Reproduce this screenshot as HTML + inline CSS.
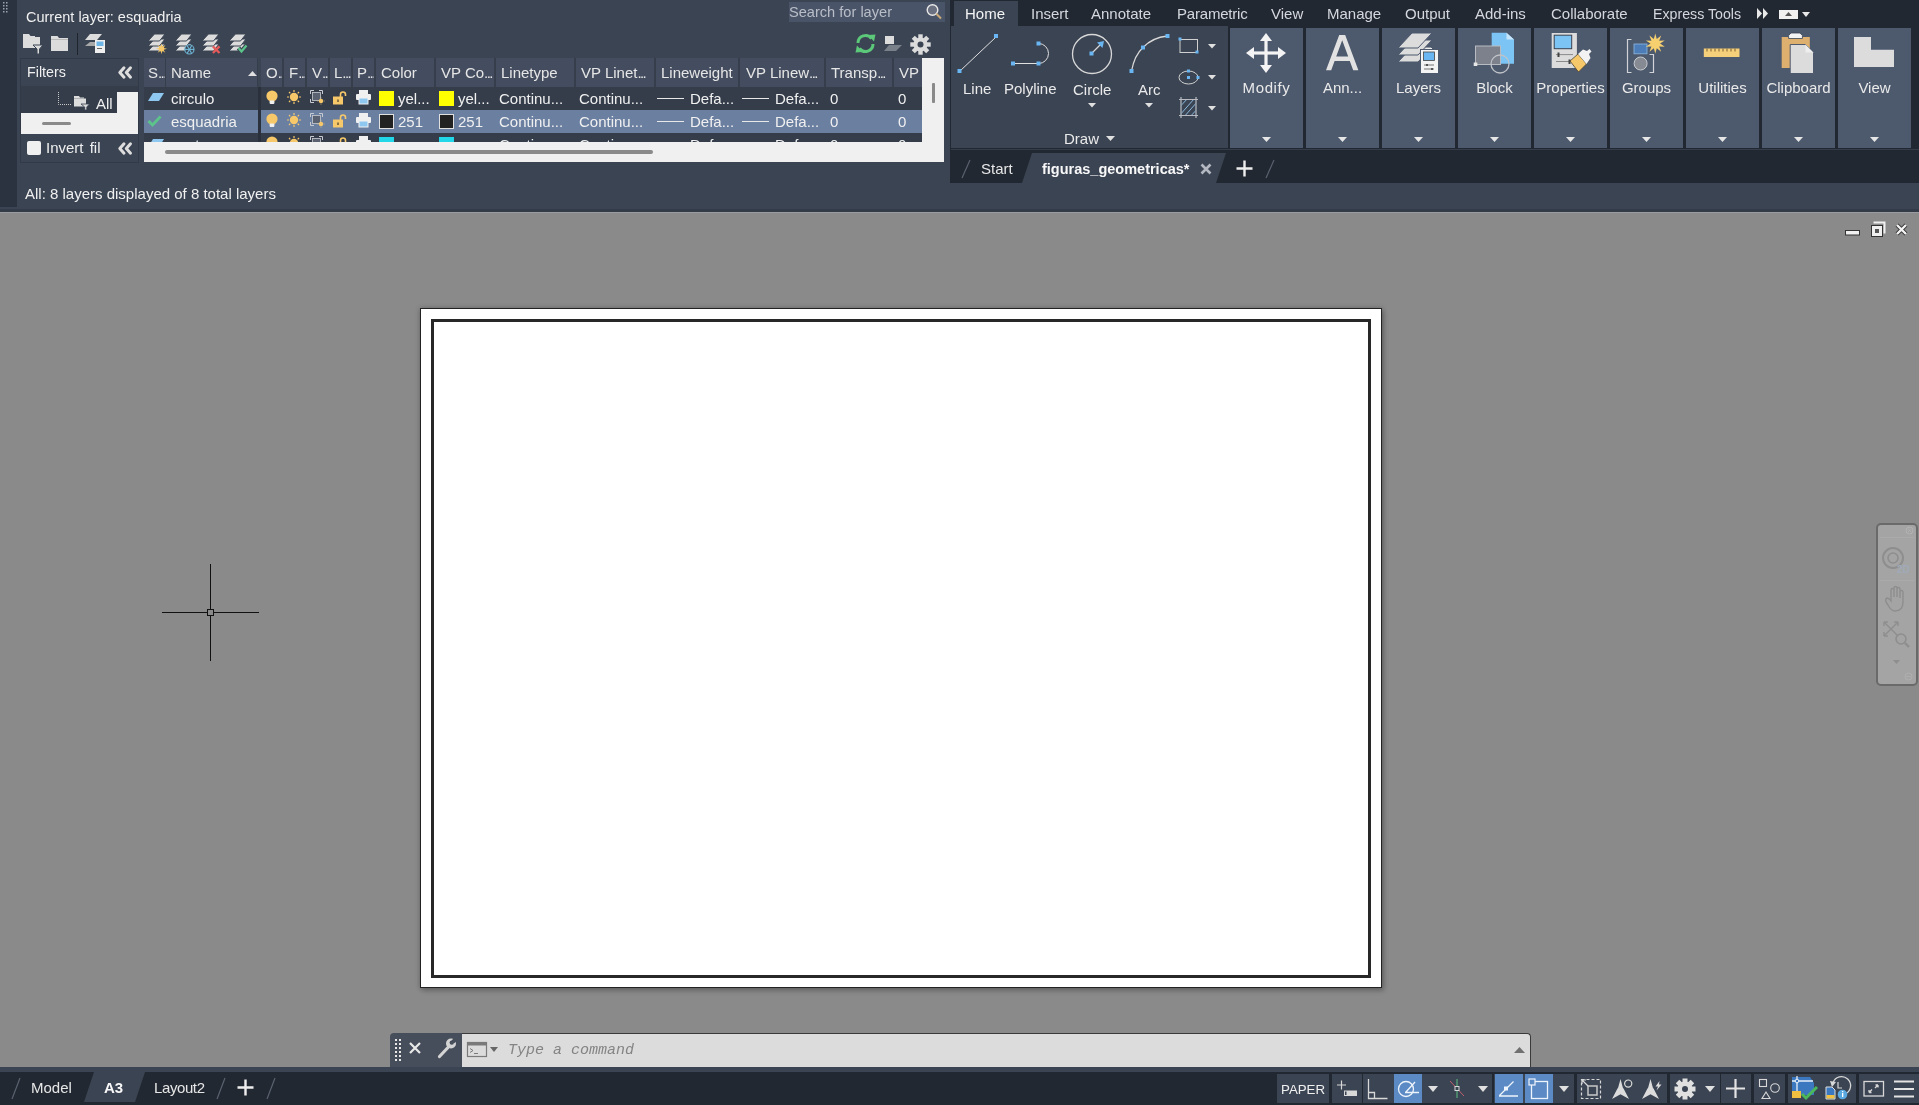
<!DOCTYPE html>
<html><head><meta charset="utf-8">
<style>
*{box-sizing:border-box;margin:0;padding:0}
html,body{width:1919px;height:1105px;overflow:hidden}
body{position:relative;background:#8a8a8a;font-family:"Liberation Sans",sans-serif;font-size:15px;color:#f0f0f0}
.a{position:absolute}
.t{position:absolute;white-space:nowrap;line-height:15px;font-size:15px;will-change:transform}
svg{position:absolute;overflow:visible}
</style></head><body>

<!-- ============ LAYER PALETTE ============ -->
<div class="a" style="left:0;top:0;width:1919px;height:212px;background:#3b4453"></div>
<div class="a" style="left:0;top:0;width:17px;height:207px;background:#2c3340"></div>
<div class="a" style="left:0;top:209px;width:1919px;height:3px;background:#343b48"></div>
<!-- grip dots -->
<svg style="left:3px;top:2px" width="6" height="10"><g fill="#9aa3b0"><rect x="0" y="0" width="1.5" height="1.5"/><rect x="3" y="0" width="1.5" height="1.5"/><rect x="0" y="3" width="1.5" height="1.5"/><rect x="3" y="3" width="1.5" height="1.5"/><rect x="0" y="6" width="1.5" height="1.5"/><rect x="3" y="6" width="1.5" height="1.5"/><rect x="0" y="9" width="1.5" height="1.5"/><rect x="3" y="9" width="1.5" height="1.5"/></g></svg>

<div class="t" style="left:26px;top:10px;font-size:14.5px">Current layer: esquadria</div>

<!-- search -->
<div class="a" style="left:789px;top:2px;width:156px;height:20px;background:#4a5468"></div>
<div class="t" style="left:789px;top:5px;font-size:14.6px;color:#b9bec8">Search for layer</div>
<svg style="left:925px;top:3px" width="20" height="19"><circle cx="7.5" cy="7" r="5.3" fill="#6a7080" stroke="#e8e8e8" stroke-width="1.4"/><line x1="11.3" y1="10.8" x2="16" y2="15.5" stroke="#c8a878" stroke-width="2"/></svg>


<!-- defs -->
<svg width="0" height="0" style="position:absolute">
<defs>
 <g id="lstack">
  <polygon points="6.5,10 17,10 11.5,17 0,17" fill="#dcdcdc" stroke="#3b4453" stroke-width="1"/>
  <polygon points="6.5,5 17,5 11.5,12 0,12" fill="#dcdcdc" stroke="#3b4453" stroke-width="1"/>
  <polygon points="6.5,0 17,0 11.5,7 0,7" fill="#dcdcdc" stroke="#3b4453" stroke-width="1"/>
 </g>
 <g id="bulb"><circle cx="7" cy="6" r="5.6" fill="#f6c86a"/><rect x="4.6" y="10.5" width="4.8" height="3.6" rx="1" fill="#f0f0f0"/></g>
 <g id="sun"><circle cx="7" cy="7" r="4.2" fill="#f6c86a"/><g stroke="#f6c86a" stroke-width="1.2"><line x1="7" y1="0" x2="7" y2="2"/><line x1="7" y1="12" x2="7" y2="14"/><line x1="0" y1="7" x2="2" y2="7"/><line x1="12" y1="7" x2="14" y2="7"/><line x1="2" y1="2" x2="3.3" y2="3.3"/><line x1="10.7" y1="10.7" x2="12" y2="12"/><line x1="12" y1="2" x2="10.7" y2="3.3"/><line x1="2" y1="12" x2="3.3" y2="10.7"/></g></g>
 <g id="vpf"><path d="M0.5,4V0.5H4M9,0.5H12.5V4M0.5,9V12.5H4" fill="none" stroke="#c8ccd2" stroke-width="1"/><rect x="2.5" y="2.5" width="8" height="8" fill="#5a6170" stroke="#c8ccd2" stroke-width="0.8"/><circle cx="11" cy="11" r="2.2" fill="#f6c86a"/><g stroke="#f6c86a" stroke-width="0.8"><line x1="11" y1="7.5" x2="11" y2="8.3"/><line x1="11" y1="13.7" x2="11" y2="14.5"/><line x1="7.5" y1="11" x2="8.3" y2="11"/><line x1="13.7" y1="11" x2="14.5" y2="11"/></g></g>
 <g id="lock"><path d="M7.5,7V4.5a2.5,2.5 0 0 1 5,0V6" fill="none" stroke="#f6c86a" stroke-width="1.6"/><rect x="0" y="6.5" width="10" height="8" fill="#f6c86a"/><rect x="4.3" y="9.5" width="1.4" height="2.5" fill="#5a4a30"/></g>
 <g id="plot"><rect x="3" y="0" width="9" height="4" fill="#f0f0f0"/><rect x="0" y="4" width="15" height="6" rx="1" fill="#f0f0f0"/><rect x="3" y="8" width="9" height="6" fill="#8ec8f0" stroke="#f0f0f0" stroke-width="1"/></g>
 <g id="chev"><path d="M6,0.8 L1.8,5.5 L6,10.2 M12.5,0.8 L8.3,5.5 L12.5,10.2" fill="none" stroke="#dedede" stroke-width="3" stroke-linejoin="round" stroke-linecap="round"/></g>
</defs></svg>

<!-- toolbar icons -->
<svg style="left:23px;top:34px" width="21" height="21">
 <path d="M0,0H6L7.5,2H12V3H0Z" fill="#dcdcdc"/><rect x="0" y="3" width="17" height="11" fill="#dcdcdc"/>
 <path d="M10,11H20L16.5,15V20H14V15Z" fill="#dcdcdc" stroke="#3b4453" stroke-width="1"/>
</svg>
<svg style="left:51px;top:36px" width="18" height="15">
 <path d="M0,0H6.5L8,2H17V15H0Z" fill="#dcdcdc"/><rect x="0" y="3" width="17" height="1" fill="#b8b8b8"/>
</svg>
<div class="a" style="left:77px;top:33px;width:1px;height:22px;background:#1e232c"></div>
<svg style="left:85px;top:34px" width="21" height="20">
 <polygon points="5,0 17,0 12,6 0,6" fill="#dcdcdc"/><polygon points="5,8 12,8 10,12 0,12" fill="#a8a8a8"/>
 <rect x="10" y="6" width="10" height="13" fill="#f0f0f0"/><rect x="11.5" y="7.5" width="7" height="4.5" fill="#6fb6e8"/><rect x="12" y="14" width="5" height="1" fill="#666"/>
</svg>
<svg style="left:148px;top:34px" width="22" height="22"><use href="#lstack"/><g transform="translate(13.5,14.8)"><polygon points="0.00,-5.50 0.84,-2.03 3.89,-3.89 2.03,-0.84 5.50,0.00 2.03,0.84 3.89,3.89 0.84,2.03 0.00,5.50 -0.84,2.03 -3.89,3.89 -2.03,0.84 -5.50,0.00 -2.03,-0.84 -3.89,-3.89 -0.84,-2.03" fill="#f6c86a"/><circle r="2.6" fill="#f6c86a"/></g></svg>
<svg style="left:175px;top:34px" width="22" height="22"><use href="#lstack"/><g transform="translate(14.4,15.4)" stroke="#6fb8d8" stroke-width="1.1" fill="none"><circle r="4.6" fill="#3b4453"/><line x1="-4.6" y1="0" x2="4.6" y2="0"/><line x1="-2.3" y1="-4" x2="2.3" y2="4"/><line x1="2.3" y1="-4" x2="-2.3" y2="4"/></g></svg>
<svg style="left:202px;top:34px" width="22" height="22"><use href="#lstack"/><g transform="translate(14.2,15.7)" stroke="#e85a5a" stroke-width="2.2"><line x1="-3.3" y1="-3.3" x2="3.3" y2="3.3"/><line x1="3.3" y1="-3.3" x2="-3.3" y2="3.3"/></g></svg>
<svg style="left:229px;top:34px" width="22" height="22"><use href="#lstack"/><path d="M9.5,14 L12.5,17.5 L17.5,11.5" fill="none" stroke="#3b4453" stroke-width="4.5"/><path d="M9.5,14 L12.5,17.5 L17.5,11.5" fill="none" stroke="#5cc48a" stroke-width="2.2"/></svg>

<!-- refresh / pref / gear -->
<svg style="left:855px;top:34px" width="22" height="19">
 <path d="M3,9 A7.5,7.5 0 0 1 16.5,4.5" fill="none" stroke="#5cc87a" stroke-width="3"/>
 <polygon points="13,1 20.5,0.5 19,7.5" fill="#5cc87a"/>
 <path d="M18,10 A7.5,7.5 0 0 1 4.5,14.5" fill="none" stroke="#5cc87a" stroke-width="3"/>
 <polygon points="8,18 0.5,18.5 2,11.5" fill="#5cc87a"/>
</svg>
<svg style="left:884px;top:36px" width="19" height="16">
 <rect x="1" y="0" width="9" height="8" fill="#dcdcdc"/><polygon points="5,9 18,9 12,15 0,15" fill="#7a808a"/>
</svg>
<svg style="left:910px;top:34px" width="21" height="21" viewBox="-10.5 -10.5 21 21">
 <g fill="#dcdcdc"><circle r="7"/><g id="teeth"><rect x="-2.2" y="-10.2" width="4.4" height="5"/><rect x="-2.2" y="5.2" width="4.4" height="5"/><rect x="-10.2" y="-2.2" width="5" height="4.4"/><rect x="5.2" y="-2.2" width="5" height="4.4"/></g><use href="#teeth" transform="rotate(45)"/></g><circle r="3" fill="#3b4453"/>
</svg>

<!-- filters box -->
<div class="a" style="left:20px;top:58px;width:119px;height:105px;background:#353d4b;border:1px solid #323947"></div>
<div class="a" style="left:21px;top:59px;width:117px;height:27px;background:#3b4453"></div>
<div class="t" style="left:27px;top:65px;font-size:14.3px">Filters</div>
<svg style="left:118px;top:67px" width="14" height="11"><use href="#chev"/></svg>
<svg style="left:58px;top:92px" width="14" height="13"><path d="M0.5,0V12.5H13" fill="none" stroke="#c8c8c8" stroke-width="1" stroke-dasharray="1,1"/></svg>
<svg style="left:74px;top:96px" width="16" height="14"><path d="M0,0H5L6,1.5H10V2.5H0Z" fill="#dcdcdc"/><rect x="0" y="2.5" width="12" height="8" fill="#dcdcdc"/><path d="M7,8H15.5L12.8,11V14H10.7V11Z" fill="#dcdcdc" stroke="#353d4b" stroke-width="0.8"/></svg>
<div class="t" style="left:96px;top:96px">All</div>
<div class="a" style="left:117px;top:92px;width:21px;height:41px;background:#f0f0f0"></div>
<div class="a" style="left:21px;top:113px;width:117px;height:21px;background:#f0f0f0"></div>
<div class="a" style="left:42px;top:122px;width:29px;height:3px;border-radius:2px;background:#8a8a8a"></div>
<div class="a" style="left:21px;top:134px;width:117px;height:28px;background:#3b4453"></div>
<div class="a" style="left:27px;top:141px;width:14px;height:14px;background:#f0f0f0;border-radius:2px"></div>
<div class="t" style="left:46px;top:140px;word-spacing:2px">Invert fil</div>
<svg style="left:118px;top:143px" width="14" height="11"><use href="#chev"/></svg>

<!-- layer table -->
<div class="a" style="left:144px;top:58px;width:778px;height:84px;overflow:hidden;background:#363e4c">
<div class="a" style="left:0px;top:0;width:21px;height:29px;background:#444d5f;overflow:hidden"><div class="t" style="left:4px;top:7px;color:#e6e6e6">S<span style='letter-spacing:-1.6px'>...</span></div></div>
<div class="a" style="left:22px;top:0;width:91px;height:29px;background:#444d5f;overflow:hidden"><div class="t" style="left:5px;top:7px;color:#e6e6e6">Name</div></div>
<div class="a" style="left:117px;top:0;width:21px;height:29px;background:#444d5f;overflow:hidden"><div class="t" style="left:5px;top:7px;color:#e6e6e6">O<span style='letter-spacing:-1.6px'>..</span></div></div>
<div class="a" style="left:140px;top:0;width:21px;height:29px;background:#444d5f;overflow:hidden"><div class="t" style="left:5px;top:7px;color:#e6e6e6">F<span style='letter-spacing:-1.6px'>...</span></div></div>
<div class="a" style="left:163px;top:0;width:21px;height:29px;background:#444d5f;overflow:hidden"><div class="t" style="left:5px;top:7px;color:#e6e6e6">V<span style='letter-spacing:-1.6px'>..</span></div></div>
<div class="a" style="left:186px;top:0;width:21px;height:29px;background:#444d5f;overflow:hidden"><div class="t" style="left:4px;top:7px;color:#e6e6e6">L<span style='letter-spacing:-1.6px'>...</span></div></div>
<div class="a" style="left:209px;top:0;width:21px;height:29px;background:#444d5f;overflow:hidden"><div class="t" style="left:4px;top:7px;color:#e6e6e6">P<span style='letter-spacing:-1.6px'>...</span></div></div>
<div class="a" style="left:232px;top:0;width:58px;height:29px;background:#444d5f;overflow:hidden"><div class="t" style="left:5px;top:7px;color:#e6e6e6">Color</div></div>
<div class="a" style="left:292px;top:0;width:58px;height:29px;background:#444d5f;overflow:hidden"><div class="t" style="left:5px;top:7px;color:#e6e6e6">VP Co<span style='letter-spacing:-1.6px'>...</span></div></div>
<div class="a" style="left:352px;top:0;width:78px;height:29px;background:#444d5f;overflow:hidden"><div class="t" style="left:5px;top:7px;color:#e6e6e6">Linetype</div></div>
<div class="a" style="left:432px;top:0;width:78px;height:29px;background:#444d5f;overflow:hidden"><div class="t" style="left:5px;top:7px;color:#e6e6e6">VP Linet<span style='letter-spacing:-1.6px'>...</span></div></div>
<div class="a" style="left:512px;top:0;width:82px;height:29px;background:#444d5f;overflow:hidden"><div class="t" style="left:5px;top:7px;color:#e6e6e6">Lineweight</div></div>
<div class="a" style="left:596px;top:0;width:84px;height:29px;background:#444d5f;overflow:hidden"><div class="t" style="left:6px;top:7px;color:#e6e6e6">VP Linew<span style='letter-spacing:-1.6px'>...</span></div></div>
<div class="a" style="left:682px;top:0;width:66px;height:29px;background:#444d5f;overflow:hidden"><div class="t" style="left:5px;top:7px;color:#e6e6e6">Transp<span style='letter-spacing:-1.6px'>...</span></div></div>
<div class="a" style="left:750px;top:0;width:39px;height:29px;background:#444d5f;overflow:hidden"><div class="t" style="left:5px;top:7px;color:#e6e6e6">VP T</div></div>
<svg style="left:104px;top:13px" width="9" height="5"><polygon points="0,5 4.5,0 9,5" fill="#e0e0e0"/></svg>
<div class="a" style="left:0;top:29px;width:778px;height:23px;background:#353d4b"></div>
<div class="a" style="left:0;top:52px;width:778px;height:23px;background:#6b7fa1"></div>
<div class="a" style="left:0;top:75px;width:778px;height:23px;background:#353d4b"></div>
<div class="a" style="left:114px;top:0;width:3px;height:84px;background:#2a303c"></div>
<div class="a" style="left:114px;top:0;width:3px;height:29px;background:#3b4453"></div>
<svg style="left:4px;top:35px" width="16" height="9"><polygon points="5,0 16,0 11,8 0,8" fill="#8ec8f0"/></svg>
<div class="t" style="left:27px;top:33px">circulo</div>
<svg style="left:121px;top:32px" width="14" height="16"><use href="#bulb"/></svg>
<svg style="left:142px;top:31px" width="16" height="16" viewBox="-1 -1 16 16"><use href="#sun"/></svg>
<svg style="left:166px;top:32px" width="16" height="16"><use href="#vpf"/></svg>
<svg style="left:189px;top:32px" width="16" height="16"><use href="#lock"/></svg>
<svg style="left:212px;top:32px" width="16" height="16"><use href="#plot"/></svg>
<div class="a" style="left:235px;top:33px;width:15px;height:15px;background:#ffff00;"></div>
<div class="t" style="left:254px;top:33px">yel...</div>
<div class="a" style="left:295px;top:33px;width:15px;height:15px;background:#ffff00;"></div>
<div class="t" style="left:314px;top:33px">yel...</div>
<div class="t" style="left:355px;top:33px">Continu...</div>
<div class="t" style="left:435px;top:33px">Continu...</div>
<div class="a" style="left:513px;top:40px;width:27px;height:1px;background:#e8e8e8"></div>
<div class="t" style="left:546px;top:33px">Defa...</div>
<div class="a" style="left:598px;top:40px;width:27px;height:1px;background:#e8e8e8"></div>
<div class="t" style="left:631px;top:33px">Defa...</div>
<div class="t" style="left:686px;top:33px">0</div>
<div class="t" style="left:754px;top:33px">0</div>
<svg style="left:3px;top:57px" width="16" height="13"><path d="M1.5,6 L5.5,10 L13.5,1.5" fill="none" stroke="#5cc48a" stroke-width="2.8"/></svg>
<div class="t" style="left:27px;top:56px">esquadria</div>
<svg style="left:121px;top:55px" width="14" height="16"><use href="#bulb"/></svg>
<svg style="left:142px;top:54px" width="16" height="16" viewBox="-1 -1 16 16"><use href="#sun"/></svg>
<svg style="left:166px;top:55px" width="16" height="16"><use href="#vpf"/></svg>
<svg style="left:189px;top:55px" width="16" height="16"><use href="#lock"/></svg>
<svg style="left:212px;top:55px" width="16" height="16"><use href="#plot"/></svg>
<div class="a" style="left:235px;top:56px;width:15px;height:15px;background:#222222;border:1px solid #e0e0e0;"></div>
<div class="t" style="left:254px;top:56px">251</div>
<div class="a" style="left:295px;top:56px;width:15px;height:15px;background:#222222;border:1px solid #e0e0e0;"></div>
<div class="t" style="left:314px;top:56px">251</div>
<div class="t" style="left:355px;top:56px">Continu...</div>
<div class="t" style="left:435px;top:56px">Continu...</div>
<div class="a" style="left:513px;top:63px;width:27px;height:1px;background:#e8e8e8"></div>
<div class="t" style="left:546px;top:56px">Defa...</div>
<div class="a" style="left:598px;top:63px;width:27px;height:1px;background:#e8e8e8"></div>
<div class="t" style="left:631px;top:56px">Defa...</div>
<div class="t" style="left:686px;top:56px">0</div>
<div class="t" style="left:754px;top:56px">0</div>
<svg style="left:4px;top:81px" width="16" height="9"><polygon points="5,0 16,0 11,8 0,8" fill="#8ec8f0"/></svg>
<div class="t" style="left:27px;top:79px">contorno</div>
<svg style="left:121px;top:78px" width="14" height="16"><use href="#bulb"/></svg>
<svg style="left:142px;top:77px" width="16" height="16" viewBox="-1 -1 16 16"><use href="#sun"/></svg>
<svg style="left:166px;top:78px" width="16" height="16"><use href="#vpf"/></svg>
<svg style="left:189px;top:78px" width="16" height="16"><use href="#lock"/></svg>
<svg style="left:212px;top:78px" width="16" height="16"><use href="#plot"/></svg>
<div class="a" style="left:235px;top:79px;width:15px;height:15px;background:#22d8e8;"></div>
<div class="t" style="left:254px;top:79px">cyan</div>
<div class="a" style="left:295px;top:79px;width:15px;height:15px;background:#22d8e8;"></div>
<div class="t" style="left:314px;top:79px">cyan</div>
<div class="t" style="left:355px;top:79px">Continu...</div>
<div class="t" style="left:435px;top:79px">Continu...</div>
<div class="a" style="left:513px;top:86px;width:27px;height:1px;background:#e8e8e8"></div>
<div class="t" style="left:546px;top:79px">Defa...</div>
<div class="a" style="left:598px;top:86px;width:27px;height:1px;background:#e8e8e8"></div>
<div class="t" style="left:631px;top:79px">Defa...</div>
<div class="t" style="left:686px;top:79px">0</div>
<div class="t" style="left:754px;top:79px">0</div>
</div>
<div class="a" style="left:922px;top:58px;width:22px;height:104px;background:#f0f0f0"></div>
<div class="a" style="left:144px;top:142px;width:800px;height:20px;background:#f0f0f0"></div>
<div class="a" style="left:932px;top:83px;width:3px;height:20px;background:#8a8a8a;border-radius:1px"></div>
<div class="a" style="left:165px;top:150px;width:488px;height:4px;background:#8a8a8a;border-radius:2px"></div>
<div class="t" style="left:25px;top:186px">All: 8 layers displayed of 8 total layers</div>


<!-- ============ RIBBON ============ -->
<div class="a" style="left:950px;top:0;width:969px;height:183px;background:#222832"></div>
<div class="a" style="left:951px;top:26px;width:277px;height:122px;background:#3b4453"></div>
<div class="a" style="left:954px;top:1px;width:64px;height:26px;background:#3b4453"></div>
<div class="t" style="left:965px;top:6px;color:#f4f4f4">Home</div>
<div class="t" style="left:1031px;top:6px;color:#d4d8de">Insert</div>
<div class="t" style="left:1091px;top:6px;color:#d4d8de">Annotate</div>
<div class="t" style="left:1177px;top:6px;color:#d4d8de;letter-spacing:-0.2px">Parametric</div>
<div class="t" style="left:1271px;top:6px;color:#d4d8de">View</div>
<div class="t" style="left:1327px;top:6px;color:#d4d8de">Manage</div>
<div class="t" style="left:1405px;top:6px;color:#d4d8de">Output</div>
<div class="t" style="left:1475px;top:6px;color:#d4d8de">Add-ins</div>
<div class="t" style="left:1551px;top:6px;color:#d4d8de">Collaborate</div>
<div class="t" style="left:1653px;top:7px;color:#d4d8de;font-size:14.2px">Express Tools</div>
<svg style="left:1757px;top:8px" width="12" height="11"><polygon points="0,0 5,5.5 0,11" fill="#e8e8e8"/><polygon points="6,0 11,5.5 6,11" fill="#e8e8e8"/></svg>
<div class="a" style="left:1779px;top:10px;width:19px;height:9px;background:#f0f0f0"></div>
<svg style="left:1785px;top:12px" width="7" height="4"><polygon points="0,4 3.5,0 7,4" fill="#555"/></svg>
<svg style="left:1802px;top:12px" width="8" height="5"><polygon points="0,0 8,0 4,5" fill="#e8e8e8"/></svg>

<!-- Draw panel icons -->
<svg style="left:956px;top:33px" width="44" height="42">
 <line x1="4" y1="38" x2="40" y2="4" stroke="#e0e0e0" stroke-width="1"/>
 <rect x="1.5" y="36" width="4" height="4" fill="#6ab6f2"/><rect x="38" y="1" width="4" height="4" fill="#6ab6f2"/>
</svg>
<div class="t" style="left:963px;top:81px;color:#eaeaea">Line</div>
<svg style="left:1009px;top:40px" width="46" height="28">
 <path d="M4,23.5 H29.5 A10,10 0 0 0 29.5,3.5" fill="none" stroke="#e0e0e0" stroke-width="1"/>
 <rect x="2" y="21.5" width="4" height="4" fill="#6ab6f2"/><rect x="27.5" y="21.5" width="4" height="4" fill="#6ab6f2"/><rect x="27.5" y="1.5" width="4" height="4" fill="#6ab6f2"/>
</svg>
<div class="t" style="left:1004px;top:81px;color:#eaeaea">Polyline</div>
<svg style="left:1070px;top:32px" width="44" height="44">
 <circle cx="22" cy="22" r="19.5" fill="none" stroke="#d8d8d8" stroke-width="1.3"/>
 <line x1="21.5" y1="21.5" x2="32" y2="11" stroke="#d8d8d8" stroke-width="1.3"/>
 <rect x="19.5" y="19.5" width="4" height="4" fill="#6ab6f2"/><polygon points="34,9 27,10.5 32.5,16" fill="#6ab6f2"/>
</svg>
<div class="t" style="left:1073px;top:82px;color:#eaeaea">Circle</div>
<svg style="left:1088px;top:103px" width="8" height="5"><polygon points="0,0 8,0 4,4.5" fill="#e0e0e0"/></svg>
<svg style="left:1128px;top:33px" width="44" height="42">
 <path d="M3.5,38 C6,25 10,19 15,14.5 C21,8 30,4 39.5,3" fill="none" stroke="#d8d8d8" stroke-width="1.3"/>
 <rect x="1.5" y="36" width="4" height="4" fill="#6ab6f2"/><rect x="13" y="12.5" width="4" height="4" fill="#6ab6f2"/><rect x="37.5" y="1" width="4" height="4" fill="#6ab6f2"/>
</svg>
<div class="t" style="left:1138px;top:82px;color:#eaeaea">Arc</div>
<svg style="left:1145px;top:103px" width="8" height="5"><polygon points="0,0 8,0 4,4.5" fill="#e0e0e0"/></svg>
<svg style="left:1178px;top:37px" width="23" height="18">
 <rect x="2" y="2.5" width="17.5" height="13" fill="none" stroke="#d0d0d0" stroke-width="1"/>
 <rect x="0.5" y="0.5" width="3" height="3" fill="#6ab6f2"/><rect x="17.5" y="13.5" width="3" height="3" fill="#6ab6f2"/>
</svg>
<svg style="left:1208px;top:44px" width="8" height="5"><polygon points="0,0 8,0 4,4.5" fill="#e0e0e0"/></svg>
<svg style="left:1178px;top:69px" width="23" height="18">
 <ellipse cx="10.5" cy="8.5" rx="9.5" ry="6.5" fill="none" stroke="#d0d0d0" stroke-width="1"/>
 <rect x="9" y="0.5" width="3" height="3" fill="#6ab6f2"/><rect x="9" y="7" width="3" height="3" fill="#6ab6f2"/><rect x="18.5" y="7" width="3" height="3" fill="#6ab6f2"/>
</svg>
<svg style="left:1208px;top:75px" width="8" height="5"><polygon points="0,0 8,0 4,4.5" fill="#e0e0e0"/></svg>
<svg style="left:1179px;top:97px" width="22" height="22">
 <path d="M2,0V21M17,0V21M0,2.5H19M0,18.5H19" stroke="#b8bcc2" stroke-width="1.2"/>
 <clipPath id="hc"><rect x="2.5" y="3" width="14" height="15"/></clipPath>
 <g clip-path="url(#hc)" stroke="#8ab8dc" stroke-width="1"><line x1="-4" y1="15" x2="10" y2="0"/><line x1="0" y1="19" x2="15" y2="2"/><line x1="4" y1="21" x2="19" y2="4"/><line x1="8" y1="23" x2="23" y2="7"/><line x1="12" y1="25" x2="27" y2="10"/></g>
</svg>
<svg style="left:1208px;top:106px" width="8" height="5"><polygon points="0,0 8,0 4,4.5" fill="#e0e0e0"/></svg>
<div class="t" style="left:1064px;top:131px;color:#eaeaea">Draw</div>
<svg style="left:1106px;top:136px" width="9" height="5"><polygon points="0,0 9,0 4.5,5" fill="#e0e0e0"/></svg>
<div class="a" style="left:1230px;top:28px;width:73px;height:120px;background:#4d596d"></div>
<div class="t" style="left:1230px;width:73px;text-align:center;top:80px;color:#eaeaea;letter-spacing:0.6px">Modify</div>
<svg style="left:1262px;top:137px" width="9" height="5"><polygon points="0,0 9,0 4.5,5" fill="#e6e6e6"/></svg>
<div class="a" style="left:1306px;top:28px;width:73px;height:120px;background:#4d596d"></div>
<div class="t" style="left:1306px;width:73px;text-align:center;top:80px;color:#eaeaea">Ann...</div>
<svg style="left:1338px;top:137px" width="9" height="5"><polygon points="0,0 9,0 4.5,5" fill="#e6e6e6"/></svg>
<div class="a" style="left:1382px;top:28px;width:73px;height:120px;background:#4d596d"></div>
<div class="t" style="left:1382px;width:73px;text-align:center;top:80px;color:#eaeaea">Layers</div>
<svg style="left:1414px;top:137px" width="9" height="5"><polygon points="0,0 9,0 4.5,5" fill="#e6e6e6"/></svg>
<div class="a" style="left:1458px;top:28px;width:73px;height:120px;background:#4d596d"></div>
<div class="t" style="left:1458px;width:73px;text-align:center;top:80px;color:#eaeaea">Block</div>
<svg style="left:1490px;top:137px" width="9" height="5"><polygon points="0,0 9,0 4.5,5" fill="#e6e6e6"/></svg>
<div class="a" style="left:1534px;top:28px;width:73px;height:120px;background:#4d596d"></div>
<div class="t" style="left:1534px;width:73px;text-align:center;top:80px;color:#eaeaea">Properties</div>
<svg style="left:1566px;top:137px" width="9" height="5"><polygon points="0,0 9,0 4.5,5" fill="#e6e6e6"/></svg>
<div class="a" style="left:1610px;top:28px;width:73px;height:120px;background:#4d596d"></div>
<div class="t" style="left:1610px;width:73px;text-align:center;top:80px;color:#eaeaea">Groups</div>
<svg style="left:1642px;top:137px" width="9" height="5"><polygon points="0,0 9,0 4.5,5" fill="#e6e6e6"/></svg>
<div class="a" style="left:1686px;top:28px;width:73px;height:120px;background:#4d596d"></div>
<div class="t" style="left:1686px;width:73px;text-align:center;top:80px;color:#eaeaea">Utilities</div>
<svg style="left:1718px;top:137px" width="9" height="5"><polygon points="0,0 9,0 4.5,5" fill="#e6e6e6"/></svg>
<div class="a" style="left:1762px;top:28px;width:73px;height:120px;background:#4d596d"></div>
<div class="t" style="left:1762px;width:73px;text-align:center;top:80px;color:#eaeaea">Clipboard</div>
<svg style="left:1794px;top:137px" width="9" height="5"><polygon points="0,0 9,0 4.5,5" fill="#e6e6e6"/></svg>
<div class="a" style="left:1838px;top:28px;width:73px;height:120px;background:#4d596d"></div>
<div class="t" style="left:1838px;width:73px;text-align:center;top:80px;color:#eaeaea">View</div>
<svg style="left:1870px;top:137px" width="9" height="5"><polygon points="0,0 9,0 4.5,5" fill="#e6e6e6"/></svg>

<!-- Modify icon -->
<svg style="left:1245px;top:32px" width="42" height="42" viewBox="-21 -21 42 42">
 <g fill="#f4f4f4"><rect x="-1.6" y="-14" width="3.2" height="28"/><rect x="-14" y="-1.6" width="28" height="3.2"/>
 <polygon points="0,-20 -6,-12 6,-12"/><polygon points="0,20 -6,12 6,12"/><polygon points="-20,0 -12,-6 -12,6"/><polygon points="20,0 12,-6 12,6"/></g>
</svg>
<!-- Ann icon -->
<svg style="left:1326px;top:35px" width="33" height="36"><path d="M0,35.2 L13.2,0 H19.2 L32.4,35.2 H27.2 L23.8,26 H8.6 L5.2,35.2Z M10.2,21.6 H22.2 L16.2,5.2Z" fill="#e2e2e2" fill-rule="evenodd"/></svg>
<!-- Layers icon -->
<svg style="left:1396px;top:31px" width="46" height="44">
 <polygon points="16,16 36,16 22,31 2,31" fill="#dcdcdc" stroke="#4d596d" stroke-width="1"/>
 <polygon points="16,9 36,9 22,24 2,24" fill="#dcdcdc" stroke="#4d596d" stroke-width="1"/>
 <polygon points="16,2 36,2 22,17 2,17" fill="#dcdcdc" stroke="#4d596d" stroke-width="1"/>
 <rect x="30" y="17" width="6" height="3" fill="#f0f0f0"/>
 <rect x="24.5" y="18.5" width="18" height="24" fill="#f4f4f4" stroke="#4d596d" stroke-width="1"/>
 <rect x="27.5" y="21" width="11" height="8.5" fill="#6ab6f2" stroke="#444" stroke-width="0.8"/>
 <path d="M28,34H38M28,38H38" stroke="#777" stroke-width="1"/><rect x="30" y="33" width="2" height="2" fill="#555"/><rect x="35" y="37" width="2" height="2" fill="#555"/>
</svg>
<!-- Block icon -->
<svg style="left:1472px;top:31px" width="46" height="46">
 <path d="M19.7,1.8H34.5L42,8.5V32.7H19.7Z" fill="#7cc4f4"/><path d="M34.5,1.8V8.5H42Z" fill="#c8e6fa"/>
 <rect x="3.5" y="15" width="25" height="18.5" fill="#7c818b" stroke="#b8bcc2" stroke-width="1"/>
 <circle cx="28" cy="33" r="9" fill="none" stroke="#bfc3c8" stroke-width="1.3"/>
 <rect x="1.7" y="31.5" width="3.6" height="3.5" fill="#e8e8e8"/>
</svg>
<!-- Properties icon -->
<svg style="left:1550px;top:32px" width="44" height="44">
 <rect x="1.7" y="1" width="25.2" height="35" fill="#dcdcdc"/>
 <rect x="4.2" y="3.2" width="17.5" height="13.5" fill="#7cc4f4" stroke="#3a4250" stroke-width="1"/>
 <path d="M6,22.6H23M6,29.5H22" stroke="#8a8a8a" stroke-width="1"/><rect x="7.5" y="20.5" width="2" height="4.5" fill="#444"/><rect x="18.5" y="27.5" width="2" height="4.5" fill="#444"/>
 <polygon points="20,29 28,22 36.5,32 28.5,40" fill="#f6c86a" stroke="#4a4030" stroke-width="0.8"/>
 <polygon points="28,22 33,17.5 37,19 39.5,17 41.5,19.5 39,22 40.5,26 36.5,32" fill="#f2f2f2"/>
</svg>
<!-- Groups icon -->
<svg style="left:1625px;top:32px" width="44" height="44">
 <path d="M6.5,7.5H2.5V40.5H6.5M24.5,22.5H28.5V40.5H24.5" fill="none" stroke="#d0d4d8" stroke-width="1.2"/>
 <rect x="9" y="12" width="13" height="9.8" fill="#4d7db8" stroke="#8cb8e0" stroke-width="0.8"/>
 <circle cx="15.6" cy="31.5" r="6.5" fill="#868a92" stroke="#c8ccd0" stroke-width="1"/>
 <g transform="translate(30.3,11.6)"><polygon points="0.00,-10.00 1.48,-4.57 5.88,-8.09 3.88,-2.82 9.51,-3.09 4.80,0.00 9.51,3.09 3.88,2.82 5.88,8.09 1.48,4.57 0.00,10.00 -1.48,4.57 -5.88,8.09 -3.88,2.82 -9.51,3.09 -4.80,0.00 -9.51,-3.09 -3.88,-2.82 -5.88,-8.09 -1.48,-4.57" fill="#f6cf6e"/></g>
</svg>
<!-- Utilities icon -->
<svg style="left:1703px;top:48px" width="38" height="10">
 <rect x="0.8" y="0.5" width="35.7" height="8.5" fill="#f6cf7a"/>
 <g stroke="#7a6030" stroke-width="1"><line x1="4" y1="0.5" x2="4" y2="3.5"/><line x1="8" y1="0.5" x2="8" y2="3.5"/><line x1="12" y1="0.5" x2="12" y2="3.5"/><line x1="16" y1="0.5" x2="16" y2="3.5"/><line x1="20" y1="0.5" x2="20" y2="3.5"/><line x1="24" y1="0.5" x2="24" y2="3.5"/><line x1="28" y1="0.5" x2="28" y2="3.5"/><line x1="32" y1="0.5" x2="32" y2="3.5"/></g>
</svg>
<!-- Clipboard icon -->
<svg style="left:1780px;top:32px" width="38" height="44">
 <rect x="1.7" y="5" width="28.1" height="31" fill="#ddb070"/>
 <path d="M8.6,6.5V3.5L11,1H20L22.4,3.5V6.5Z" fill="#f4f4f4" stroke="#3a4250" stroke-width="0.8"/>
 <path d="M10.2,12.5H25.5L33.5,20.5V41.5H10.2Z" fill="#dcdcdc" stroke="#4d596d" stroke-width="1"/><path d="M25.5,12.5V20.5H33.5Z" fill="#eeeeee"/>
</svg>
<!-- View icon -->
<svg style="left:1854px;top:37px" width="41" height="31">
 <path d="M0,0H17V12.7H40V30H0Z" fill="#dcdcdc"/>
</svg>

<div class="a" style="left:951px;top:149px;width:968px;height:1px;background:#353d4b"></div>
<!-- File tabs row -->
<div class="a" style="left:951px;top:153px;width:968px;height:30px;background:#222832"></div>
<svg style="left:960px;top:158px" width="14" height="22"><line x1="2" y1="20" x2="10" y2="2" stroke="#5a6270" stroke-width="1.2"/></svg>
<div class="t" style="left:981px;top:161px;color:#e6e6e6">Start</div>
<svg style="left:1020px;top:153px" width="208" height="30"><polygon points="12,0 206,0 196,30 2,30" fill="#3b4453"/></svg>
<div class="t" style="left:1042px;top:162px;font-weight:bold;font-size:14.5px;color:#f8f8f8">figuras_geometricas*</div>
<svg style="left:1200px;top:163px" width="12" height="12"><path d="M1.5,1.5L10.5,10.5M10.5,1.5L1.5,10.5" stroke="#b4b8c0" stroke-width="2.6"/></svg>
<svg style="left:1236px;top:160px" width="17" height="17"><path d="M8.5,0.5V16.5M0.5,8.5H16.5" stroke="#eeeeee" stroke-width="2.4"/></svg>
<svg style="left:1264px;top:158px" width="14" height="22"><line x1="2" y1="20" x2="10" y2="2" stroke="#5a6270" stroke-width="1.2"/></svg>


<!-- ============ DRAWING AREA ============ -->
<div class="a" style="left:0;top:212px;width:1919px;height:1px;background:#9a9ca2"></div>
<!-- paper -->
<div class="a" style="left:420px;top:308px;width:962px;height:680px;background:#ffffff;border:1px solid #222;box-shadow:2px 3px 5px rgba(0,0,0,0.2), 0 0 5px rgba(0,0,0,0.24)"></div>
<div class="a" style="left:431px;top:319px;width:940px;height:659px;border:3px solid #282828"></div>
<!-- crosshair -->
<div class="a" style="left:210px;top:564px;width:1px;height:97px;background:#111"></div>
<div class="a" style="left:162px;top:612px;width:97px;height:1px;background:#111"></div>
<div class="a" style="left:207px;top:609px;width:7px;height:7px;border:1px solid #111;background:#8a8a8a"></div>
<!-- viewport controls -->
<svg style="left:1843px;top:220px" width="70" height="20">
 <rect x="2.5" y="10.5" width="14" height="4.5" fill="#f0f0f0" stroke="#333" stroke-width="1"/>
 <path d="M30.5,2.5H41.5V13.5" fill="none" stroke="#f0f0f0" stroke-width="2"/>
 <rect x="28.5" y="5.5" width="11" height="11" fill="#f0f0f0" stroke="#333" stroke-width="1"/>
 <rect x="32" y="9" width="4" height="4" fill="#555"/>
 <path d="M54,5L63,14M63,5L54,14" stroke="#333" stroke-width="4"/>
 <path d="M54,5L63,14M63,5L54,14" stroke="#f4f4f4" stroke-width="2.4"/>
</svg>
<!-- navbar -->
<div class="a" style="left:1876px;top:523px;width:42px;height:163px;background:#a4a4a4;border:2px solid #6a6a6a;border-radius:5px"></div>
<div class="a" style="left:1880px;top:537px;width:34px;height:1px;background:#aaaaaa"></div>
<div class="a" style="left:1880px;top:580px;width:34px;height:1px;background:#aaaaaa"></div>
<svg style="left:1905px;top:526px" width="9" height="9"><circle cx="4.5" cy="4.5" r="3.5" fill="none" stroke="#b4b4b4" stroke-width="1"/><path d="M3,3L6,6M6,3L3,6" stroke="#b4b4b4" stroke-width="0.8"/></svg>
<svg style="left:1881px;top:546px" width="34" height="30">
 <circle cx="12" cy="12" r="10" fill="none" stroke="#8e8e8e" stroke-width="2"/><circle cx="12" cy="12" r="5" fill="none" stroke="#8e8e8e" stroke-width="1.6"/>
 <text x="16" y="27" font-family="Liberation Sans" font-size="10" font-weight="bold" fill="#a0aab8">2D</text>
</svg>
<svg style="left:1882px;top:585px" width="30" height="30">
 <path d="M6,20 C3,16 3,14 5,13 C7,13 8,15 9,16 V5 C9,3 12,3 12,5 V12 V3 C12,1 15,1 15,3 V12 V4 C15,2 18,2 18,4 V13 V7 C18,5 21,5 21,7 V17 C21,23 18,26 13,26 C10,26 8,24 6,20Z" fill="none" stroke="#8e8e8e" stroke-width="1.4"/>
</svg>
<svg style="left:1882px;top:620px" width="32" height="32">
 <path d="M2,2L16,16M16,2L2,16" stroke="#8e8e8e" stroke-width="1.4"/>
 <path d="M2,2H6M2,2V6M16,2H12M16,2V6M2,16V12M2,16H6" stroke="#8e8e8e" stroke-width="1.4"/>
 <circle cx="19" cy="19" r="5" fill="none" stroke="#8e8e8e" stroke-width="1.6"/><line x1="23" y1="23" x2="27" y2="27" stroke="#8e8e8e" stroke-width="2.4"/>
</svg>
<svg style="left:1893px;top:660px" width="7" height="4"><polygon points="0,0 7,0 3.5,4" fill="#8e8e8e"/></svg>
<svg style="left:1904px;top:672px" width="9" height="9"><circle cx="4.5" cy="4.5" r="3.5" fill="none" stroke="#b0b0b0" stroke-width="1"/><line x1="2" y1="4.5" x2="7" y2="4.5" stroke="#b0b0b0" stroke-width="0.8"/></svg>

<!-- ============ COMMAND LINE ============ -->
<div class="a" style="left:390px;top:1033px;width:74px;height:34px;background:#474e5b;border-radius:4px 0 0 0"></div>
<svg style="left:395px;top:1039px" width="8" height="24"><g fill="#e8e8e8"><rect x="0" y="0" width="2" height="2"/><rect x="4" y="0" width="2" height="2"/><rect x="0" y="4" width="2" height="2"/><rect x="4" y="4" width="2" height="2"/><rect x="0" y="8" width="2" height="2"/><rect x="4" y="8" width="2" height="2"/><rect x="0" y="12" width="2" height="2"/><rect x="4" y="12" width="2" height="2"/><rect x="0" y="16" width="2" height="2"/><rect x="4" y="16" width="2" height="2"/><rect x="0" y="20" width="2" height="2"/><rect x="4" y="20" width="2" height="2"/></g></svg>
<svg style="left:408px;top:1041px" width="14" height="14"><path d="M2,2L12,12M12,2L2,12" stroke="#e8e8e8" stroke-width="2.2"/></svg>
<svg style="left:436px;top:1038px" width="22" height="22">
 <path d="M3.5,18.5 L12,9.5" stroke="#d4d4d4" stroke-width="3.2" stroke-linecap="round"/>
 <circle cx="15" cy="5.5" r="5" fill="#d4d4d4"/>
 <circle cx="15.8" cy="4.6" r="2.2" fill="#474e5b"/>
 <polygon points="15.5,2.6 18,0 21,3 18.2,5.3" fill="#474e5b"/>
</svg>
<div class="a" style="left:462px;top:1033px;width:1069px;height:34px;background:#dcdcdc;border:1px solid #3a3a3a;border-left:none;border-bottom:none;border-radius:0 4px 0 0"></div>
<svg style="left:466px;top:1041px" width="34" height="17">
 <rect x="1.5" y="1.5" width="19" height="14" fill="none" stroke="#7a7a7a" stroke-width="1.2"/><rect x="1.5" y="1.5" width="19" height="3" fill="#7a7a7a"/>
 <path d="M4,7.5L7,9.5L4,11.5M8,12.5H12" fill="none" stroke="#7a7a7a" stroke-width="1"/>
 <polygon points="24,6 32,6 28,11" fill="#666"/>
</svg>
<div class="t" style="left:508px;top:1043px;font-family:'Liberation Mono',monospace;font-style:italic;color:#848484">Type a command</div>
<svg style="left:1514px;top:1047px" width="11" height="6"><polygon points="0,6 5.5,0 11,6" fill="#707070"/></svg>

<!-- ============ LAYOUT TABS / STATUS BAR ============ -->
<div class="a" style="left:0;top:1067px;width:1919px;height:5px;background:#3b4453"></div>
<div class="a" style="left:0;top:1072px;width:1919px;height:33px;background:#222832"></div>
<svg style="left:10px;top:1075px" width="12" height="26"><line x1="2" y1="24" x2="10" y2="3" stroke="#5a6270" stroke-width="1.2"/></svg>
<div class="t" style="left:31px;top:1080px;color:#e6e6e6">Model</div>
<svg style="left:84px;top:1072px" width="62" height="30"><polygon points="10,0 61,0 51,30 0,30" fill="#3b4453"/></svg>
<div class="t" style="left:104px;top:1080px;font-weight:bold;color:#f8f8f8">A3</div>
<div class="t" style="left:154px;top:1080px;color:#e6e6e6;letter-spacing:-0.4px">Layout2</div>
<svg style="left:215px;top:1075px" width="12" height="26"><line x1="2" y1="24" x2="10" y2="3" stroke="#5a6270" stroke-width="1.2"/></svg>
<svg style="left:237px;top:1079px" width="17" height="17"><path d="M8.5,0.5V16.5M0.5,8.5H16.5" stroke="#eeeeee" stroke-width="2.4"/></svg>
<svg style="left:265px;top:1075px" width="12" height="26"><line x1="2" y1="24" x2="10" y2="3" stroke="#5a6270" stroke-width="1.2"/></svg>
<div class="a" style="left:1277px;top:1074px;width:52px;height:29px;background:#3b4453"></div>
<div class="a" style="left:1332px;top:1074px;width:30px;height:29px;background:#3b4453"></div>
<div class="a" style="left:1363px;top:1074px;width:129px;height:29px;background:#3b4453"></div>
<div class="a" style="left:1577px;top:1074px;width:90px;height:29px;background:#3b4453"></div>
<div class="a" style="left:1670px;top:1074px;width:50px;height:29px;background:#3b4453"></div>
<div class="a" style="left:1721px;top:1074px;width:30px;height:29px;background:#3b4453"></div>
<div class="a" style="left:1754px;top:1074px;width:31px;height:29px;background:#3b4453"></div>
<div class="a" style="left:1788px;top:1074px;width:68px;height:29px;background:#3b4453"></div>
<div class="a" style="left:1859px;top:1074px;width:60px;height:29px;background:#3b4453"></div>
<div class="a" style="left:1494px;top:1074px;width:80px;height:29px;background:#3b4453"></div>
<div class="a" style="left:1394px;top:1074px;width:28px;height:29px;background:#5b8ac4"></div>
<div class="a" style="left:1495px;top:1074px;width:28px;height:29px;background:#5b8ac4"></div>
<div class="a" style="left:1525px;top:1074px;width:28px;height:29px;background:#5b8ac4"></div>

<div class="t" style="left:1281px;top:1082px;font-size:13.3px;color:#f0f0f0">PAPER</div>
<svg style="left:1336px;top:1080px" width="24" height="18">
 <path d="M5.5,0.5V9.5M1,5H10" stroke="#d8d8d8" stroke-width="1.2"/><rect x="8" y="10.5" width="13" height="5.5" fill="#d8d8d8"/><rect x="9" y="11.5" width="1.5" height="3.5" fill="#3b4453"/>
</svg>
<svg style="left:1367px;top:1078px" width="22" height="22"><path d="M1.5,1V20.5H20.5M1.5,14.5H7.5V20.5" fill="none" stroke="#d8d8d8" stroke-width="1.3"/></svg>
<svg style="left:1397px;top:1079px" width="24" height="20">
 <circle cx="9" cy="10" r="7.5" fill="none" stroke="#eef4fb" stroke-width="1.3"/><path d="M8,13.5H22M8.5,13.5L18,3" stroke="#eef4fb" stroke-width="1.3"/>
</svg>
<svg style="left:1428px;top:1086px" width="10" height="6"><polygon points="0,0 10,0 5,6" fill="#e0e0e0"/></svg>
<svg style="left:1449px;top:1078px" width="18" height="22">
 <line x1="8" y1="1" x2="8" y2="20" stroke="#5cbf80" stroke-width="1"/><line x1="1" y1="3" x2="15" y2="18" stroke="#c06070" stroke-width="1"/>
 <rect x="6" y="8.5" width="4" height="4" fill="#3b4453" stroke="#d8d8d8" stroke-width="1"/>
</svg>
<svg style="left:1478px;top:1086px" width="10" height="6"><polygon points="0,0 10,0 5,6" fill="#e0e0e0"/></svg>
<svg style="left:1498px;top:1080px" width="22" height="18">
 <path d="M1,16H20M1.5,15.5L15.5,1.5" stroke="#eef4fb" stroke-width="1.3"/><rect x="6" y="6.5" width="4" height="4" fill="#eef4fb"/>
</svg>
<svg style="left:1528px;top:1078px" width="22" height="22">
 <rect x="3.5" y="3.5" width="16" height="17" fill="none" stroke="#eef4fb" stroke-width="1.3"/><rect x="1" y="1" width="6" height="6" fill="#5b8ac4" stroke="#eef4fb" stroke-width="1.2"/>
</svg>
<svg style="left:1559px;top:1086px" width="10" height="6"><polygon points="0,0 10,0 5,6" fill="#e0e0e0"/></svg>
<svg style="left:1580px;top:1078px" width="24" height="22">
 <rect x="1.5" y="1.5" width="19" height="19" fill="none" stroke="#d8d8d8" stroke-width="1.2" stroke-dasharray="3,2"/>
 <rect x="8" y="8" width="9" height="9" fill="#3b4453" stroke="#c8c8c8" stroke-width="1.5"/>
 <path d="M2,2L8,8M2,2H6M2,2V6" stroke="#d8d8d8" stroke-width="1.2"/>
</svg>
<svg style="left:1611px;top:1078px" width="24" height="22">
 <polygon points="9.5,1 11.8,9.5 12.8,11 18,21 9.5,16.3 1,21 6.2,11 7.2,9.5" fill="#dcdcdc"/><circle cx="17.2" cy="5.6" r="3.6" fill="none" stroke="#dcdcdc" stroke-width="1.2"/>
</svg>
<svg style="left:1641px;top:1078px" width="24" height="22">
 <polygon points="9.5,1 11.8,9.5 12.8,11 18,21 9.5,16.3 1,21 6.2,11 7.2,9.5" fill="#dcdcdc"/><polygon points="18.5,3 14.5,8.5 17,8.5 15.5,12.5 20.5,6.5 18,6.5" fill="#dcdcdc"/>
</svg>
<svg style="left:1674px;top:1078px" width="22" height="22" viewBox="-11 -11 22 22">
 <g fill="#e0e0e0"><circle r="7.5"/><g id="teeth2"><rect x="-2.5" y="-10.5" width="5" height="5"/><rect x="-2.5" y="5.5" width="5" height="5"/><rect x="-10.5" y="-2.5" width="5" height="5"/><rect x="5.5" y="-2.5" width="5" height="5"/></g><use href="#teeth2" transform="rotate(45)"/></g><circle r="3" fill="#3b4453"/>
</svg>
<svg style="left:1705px;top:1086px" width="10" height="6"><polygon points="0,0 10,0 5,6" fill="#e0e0e0"/></svg>
<svg style="left:1725px;top:1078px" width="22" height="22"><path d="M10.5,1V20M1,10.5H20" stroke="#e4e4e4" stroke-width="2.2"/></svg>
<svg style="left:1758px;top:1078px" width="24" height="22">
 <rect x="1.5" y="1.5" width="7" height="7" fill="none" stroke="#d8d8d8" stroke-width="1.1"/><circle cx="17" cy="10" r="4.3" fill="none" stroke="#d8d8d8" stroke-width="1.1"/><polygon points="8,14 12,20.5 4,20.5" fill="none" stroke="#d8d8d8" stroke-width="1.1"/>
</svg>
<svg style="left:1791px;top:1075px" width="28" height="26">
 <path d="M1,2H19L23,8V20H1Z" fill="#3b78c0"/><path d="M6,1V17M1,6H22" stroke="#e8f0f8" stroke-width="1.3"/><circle cx="6" cy="6" r="1.8" fill="#3b78c0" stroke="#e8f0f8" stroke-width="1"/>
 <rect x="1" y="16" width="9" height="7" fill="#f2c040"/>
 <path d="M11,19L15,23L26,12" fill="none" stroke="#4cb85c" stroke-width="3"/>
</svg>
<svg style="left:1825px;top:1077px" width="24" height="24">
 <path d="M8,6A9,9 0 1 1 20,17" fill="none" stroke="#d8d8d8" stroke-width="1.3"/><polygon points="5,4 11,5 7,10" fill="#d8d8d8"/><path d="M13,5V11H17" fill="none" stroke="#d8d8d8" stroke-width="1.2"/>
 <path d="M1,10H7L10,13V22H1Z" fill="#3b78c0" stroke="#e0e0e0" stroke-width="1"/><rect x="1.5" y="18" width="8" height="3.5" fill="#f2c040"/>
 <circle cx="17.5" cy="17.5" r="4.8" fill="#5aa8e0"/><rect x="17" y="16" width="1.3" height="4" fill="#fff"/><rect x="17" y="14" width="1.3" height="1.2" fill="#fff"/>
</svg>
<svg style="left:1863px;top:1080px" width="22" height="18">
 <rect x="1" y="1.5" width="19.5" height="14.5" fill="none" stroke="#d8d8d8" stroke-width="1.3"/>
 <path d="M15,5L12,8M15,5H12.5M15,5V7.5M6,12.5L9,9.5M6,12.5H8.5M6,12.5V10" stroke="#d8d8d8" stroke-width="1.3"/>
</svg>
<svg style="left:1894px;top:1080px" width="21" height="18"><path d="M0,1.5H20M0,9H20M0,16.5H20" stroke="#e4e4e4" stroke-width="2"/></svg>

</body></html>
